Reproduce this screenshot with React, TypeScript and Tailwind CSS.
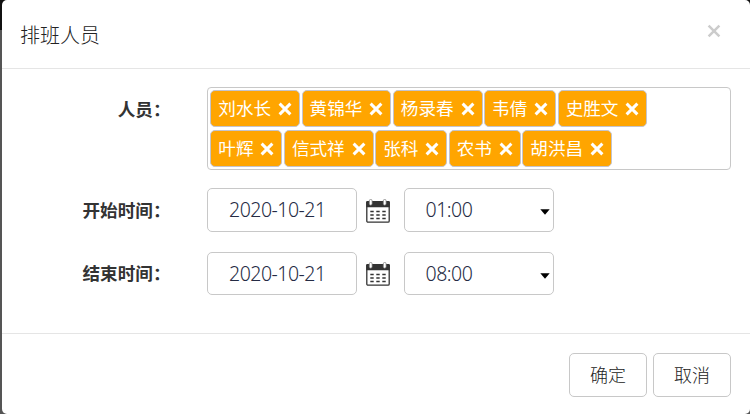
import React from "react";

const staff: string[][] = [
  ["刘水长", "黄锦华", "杨录春", "韦倩", "史胜文"],
  ["叶辉", "信式祥", "张科", "农书", "胡洪昌"],
];

function Cross({ className }: { className: string }) {
  return (
    <svg viewBox="0 0 14 14" className={className} fill="none" stroke="currentColor">
      <path d="M1.6 1.6 12.4 12.4M12.4 1.6 1.6 12.4" />
    </svg>
  );
}

function Tag({ name }: { name: string }) {
  return (
    <span
      className={
        "flex h-[36.5px] shrink-0 items-center justify-between rounded-[5px] border border-[#c4c4cc] bg-[#ffa500] pr-[7px] pl-[7px] text-[17.6px] leading-none text-white " +
        (name.length === 3 ? "w-[89.75px]" : "w-[72.1px]")
      }
    >
      <span>{name}</span>
      <Cross className="mt-[2px] size-[14px] stroke-[3]" />
    </span>
  );
}

function CalendarIcon() {
  return (
    <svg viewBox="0 0 24 24" className="h-6 w-6">
      <rect x="0.8" y="2.6" width="22.4" height="20.6" rx="1.2" fill="#fff" stroke="#333" strokeWidth="1.3" />
      <path d="M0.2 3.2Q0.2 2 1.4 2H22.6Q23.8 2 23.8 3.2V8.2H0.2Z" fill="#333" />
      <rect x="3.3" y="0.4" width="2.8" height="5.8" rx="1.4" fill="#fff" stroke="#777" strokeWidth="0.7" />
      <rect x="17.3" y="0.4" width="2.8" height="5.8" rx="1.4" fill="#fff" stroke="#777" strokeWidth="0.7" />
      <path d="M4.3 12.4h3.4M10.3 12.4h3.4M16.3 12.4h3.4M4.3 16h3.4M10.3 16h3.4M16.3 16h3.4M4.3 19.4h3.4M10.3 19.4h3.4M16.3 19.4h3.4" stroke="#333" strokeWidth="1.5" />
    </svg>
  );
}

function Label({ children }: { children: string }) {
  return <span className="flex w-[205px] shrink-0 justify-end pr-[36.5px] pb-[1px] text-[17.6px] leading-[26px] font-bold text-[#333]">{children}</span>;
}

function TimeRow({ label, date, time, height }: { label: string; date: string; time: string; height: string }) {
  return (
    <div className={"flex items-center " + height}>
      <Label>{label}</Label>
      <div className="flex h-full w-[150px] items-center rounded-[5px] border border-[#c8c8c8] pl-[21px] font-['Noto_Sans','Open_Sans',sans-serif] text-[19.5px] font-light tracking-[-0.5px] text-[#252b44]">
        {date}
      </div>
      <div className="mt-[1px] ml-[9px]">
        <CalendarIcon />
      </div>
      <div className="ml-[14px] flex h-full w-[150px] items-center justify-between rounded-[5px] border border-[#c8c8c8] pr-[3.5px] pl-[20.5px] font-['Noto_Sans','Open_Sans',sans-serif] text-[19.5px] font-light tracking-[-0.5px] text-[#252b44]">
        {time}
        <svg viewBox="0 0 10 6" className="mt-[4px] h-[6px] w-[10px]">
          <path d="M0.3 0.3H9.7L5 5.7Z" fill="#000" />
        </svg>
      </div>
    </div>
  );
}

export default function App() {
  return (
    <div className="h-[414px] w-[750px] overflow-hidden bg-[linear-gradient(#111_30px,#555_30px)] pl-[2px] font-['Noto_Sans_CJK_SC',sans-serif] text-[#333]">
      <div className="flex h-[414px] w-[748px] flex-col rounded-[5px] bg-white">
        <header className="flex h-[69px] items-center justify-between border-b border-[#e5e5e5] pr-[29px] pl-[18px]">
          <h1 className="pt-[1px] text-[20px] leading-[30px] font-light text-[#222]">排班人员</h1>
          <Cross className="mb-[7px] size-[14px] stroke-[2.5] text-[#ccc]" />
        </header>
        <main className="flex h-[265px] flex-col border-b border-[#e5e5e5] pt-[18px]">
          <div className="flex">
            <div className="flex h-[45px] items-center">
              <Label>人员：</Label>
            </div>
            <div className="flex h-[83px] w-[524px] flex-col gap-[3.5px] rounded-[4px] border border-[#c8c8c8] pt-[2px] pl-[2.3px]">
              {staff.map((row, i) => (
                <div key={i} className="flex gap-[1.5px]">
                  {row.map((name) => (
                    <Tag key={name} name={name} />
                  ))}
                </div>
              ))}
            </div>
          </div>
          <div className="mt-[18px] flex flex-col gap-5">
            <TimeRow label="开始时间：" date="2020-10-21" time="01:00" height="h-[44px]" />
            <TimeRow label="结束时间：" date="2020-10-21" time="08:00" height="h-[43px]" />
          </div>
        </main>
        <footer className="flex justify-end gap-[6px] pt-[19px] pr-[19px] text-[18px] font-light text-[#222]">
          <button className="h-[44px] w-[78px] rounded-[5px] border border-[#c8c8c8] pb-[2px]">确定</button>
          <button className="h-[44px] w-[78px] rounded-[5px] border border-[#c8c8c8] pb-[2px]">取消</button>
        </footer>
      </div>
    </div>
  );
}
